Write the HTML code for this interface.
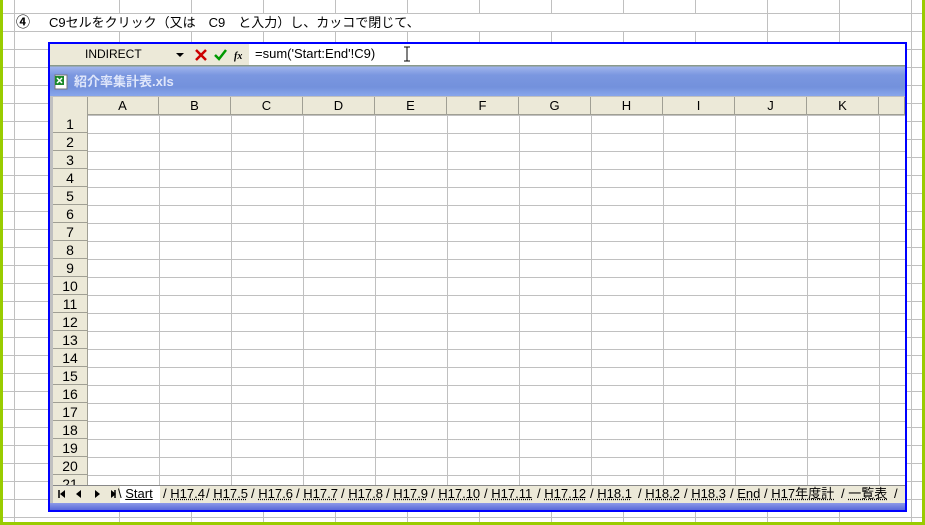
<!DOCTYPE html>
<html><head><meta charset="utf-8"><style>
*{margin:0;padding:0;box-sizing:border-box}
body{width:925px;height:525px;overflow:hidden;background:#fff;position:relative;font-family:"Liberation Sans","Noto Sans CJK JP",sans-serif;}
.bg{position:absolute;left:0;top:0;width:925px;height:525px;
background-image:repeating-linear-gradient(to right,transparent 0,transparent 71px,#c0c0c0 71px,#c0c0c0 72px),repeating-linear-gradient(to bottom,transparent 0,transparent 17px,#c0c0c0 17px,#c0c0c0 18px);
background-position:48px 0,0 -4px;}
.vl{position:absolute;top:0;width:1px;height:525px;background:#c0c0c0}
.gl{position:absolute;background:#99cc00}
.a{position:absolute}
.hdr{background:#ece9d8;color:#000;font-size:13px;text-align:center}
.tab{position:absolute;top:0;font-size:13px;height:16px;line-height:16px}
.tab span{text-decoration:underline dotted;}
</style></head><body>
<div class="bg"></div>
<div class="vl" style="left:14px"></div>
<div class="gl" style="left:0;top:0;width:3px;height:525px"></div>
<div class="gl" style="left:922px;top:0;width:3px;height:525px"></div>
<div class="gl" style="left:0;top:522px;width:925px;height:3px"></div>
<div class="a" style="left:49px;top:14px;width:700px;height:17px;background:#fff;font-size:13px;line-height:17px;white-space:pre">C9セルをクリック（又は　C9　と入力）し、カッコで閉じて、</div>
<div class="a" style="left:16px;top:14px;font-size:14px;line-height:17px;font-weight:bold">④</div>

<div class="a" style="left:48px;top:42px;width:859px;height:470px;border:2px solid #0000ff;background:#fff"></div>
<div class="a" style="left:50px;top:44px;width:855px;height:21px;background:#ece9d8"></div>
<div class="a" style="left:249px;top:44px;width:656px;height:21px;background:#fff"></div>
<div class="a" style="left:85px;top:46px;font-size:12px;line-height:16px">INDIRECT</div>
<div class="a" style="left:176px;top:53px;width:0;height:0;border-left:4px solid transparent;border-right:4px solid transparent;border-top:4px solid #000"></div>
<svg class="a" style="left:194px;top:48px" width="60" height="14"><path d="M2 2L12 12M12 2L2 12" stroke="#c00" stroke-width="2.5"/><path d="M21 7L25 11L32 2" stroke="#090" stroke-width="2.5" fill="none"/><text x="40" y="11" font-size="10" font-style="italic" font-weight="bold" font-family="Liberation Serif">fx</text></svg>
<div class="a" style="left:255px;top:46px;font-size:13px;line-height:16px">=sum('Start:End'!C9)</div>
<svg class="a" style="left:403px;top:46px" width="8" height="16"><path d="M1 1H7M4 1V15M1 15H7" stroke="#000" fill="none"/></svg>

<div class="a" style="left:50px;top:65px;width:855px;height:445px;background:#c0c0c0"></div>
<div class="a" style="left:50px;top:65px;width:855px;height:31px;background:linear-gradient(#8a9a8a 0,#8a9a8a 1px,#9fb3ec 2px,#7b97e0 10px,#7391dc 22px,#86a4ea 30px)"></div>
<svg class="a" style="left:54px;top:74px" width="14" height="16"><rect x="1" y="1" width="12" height="14" fill="#fff" stroke="#777"/><rect x="1" y="2" width="9" height="9" fill="#1d8a2c"/><path d="M3 4L8 9M8 4L3 9" stroke="#fff" stroke-width="1.5"/></svg>
<div class="a" style="left:74px;top:73px;font-size:13px;font-weight:bold;color:#dfe6fa;line-height:17px">紹介率集計表.xls</div>

<div class="a" style="left:53px;top:97px;width:852px;height:388px;background:#fff;
background-image:repeating-linear-gradient(to right,transparent 0,transparent 71px,#c0c0c0 71px,#c0c0c0 72px),repeating-linear-gradient(to bottom,transparent 0,transparent 17px,#c0c0c0 17px,#c0c0c0 18px);background-position:35px 0,0 1px;"></div>
<div class="a hdr" style="left:53px;top:97px;width:852px;height:18px;border-bottom:1px solid #a09f94"></div>
<div class="a" id="cols" style="left:87px;top:97px;height:18px"></div>
<div class="a hdr" style="left:53px;top:97px;width:35px;height:388px;border-right:1px solid #a09f94"></div>
<div id="rows"></div>

<div class="a" style="left:53px;top:485px;width:852px;height:18px;background:#ece9d8;border-top:1px solid #888"></div>
<svg class="a" style="left:55px;top:488px" width="62" height="12"><path d="M4 2V10" stroke="#000" stroke-width="1.5"/><path d="M10 2L5 6L10 10Z M26 2L21 6L26 10Z M40 2L45 6L40 10Z M56 2L61 6L56 10Z"/><path d="M60 2V10" stroke="#000" stroke-width="1.5"/></svg>
<div class="a" style="left:120px;top:486px;width:40px;height:17px;background:#fff"></div>
<div class="a" id="tabs" style="left:118px;top:486px;height:17px"></div>
<div class="a" style="left:50px;top:503px;width:855px;height:7px;background:linear-gradient(#8d9ae8,#5868d8)"></div>
<script>
var c=document.getElementById('cols'),h='';
'ABCDEFGHIJK'.split('').forEach(function(l,i){h+='<div style="position:absolute;left:'+(i*72)+'px;top:0;width:72px;height:18px;border-right:1px solid #a09f94;font-size:13px;line-height:18px;text-align:center">'+l+'</div>'});
h+='<div style="position:absolute;left:792px;top:0;width:26px;height:18px;border-right:1px solid #a09f94"></div>';
c.innerHTML=h;
var r='';for(var i=1;i<=21;i++){r+='<div class="a" style="left:53px;top:'+(115+(i-1)*18)+'px;width:34px;height:18px;border-bottom:1px solid #a09f94;font-size:14px;line-height:19px;text-align:center;background:#ece9d8">'+i+'</div>'}
document.getElementById('rows').innerHTML=r;
var t=['Start','H17.4','H17.5','H17.6','H17.7','H17.8','H17.9','H17.10','H17.11','H17.12','H18.1','H18.2','H18.3','End','H17年度計','一覧表'];
var w=[45,43,45,45,45,45,45,53,53,53,48,46,46,34,77,57],x=0,s='';
t.forEach(function(n,i){s+='<div class="tab" style="left:'+x+'px;width:'+w[i]+'px">'+(i==0?'\\':'/')+' <span'+(i==0?' style="text-decoration:underline solid"':'')+'>'+n+'</span></div>';x+=w[i];});
s+='<div class="tab" style="left:'+(x-4)+'px">/</div>';
document.getElementById('tabs').innerHTML=s;
</script>
</body></html>
